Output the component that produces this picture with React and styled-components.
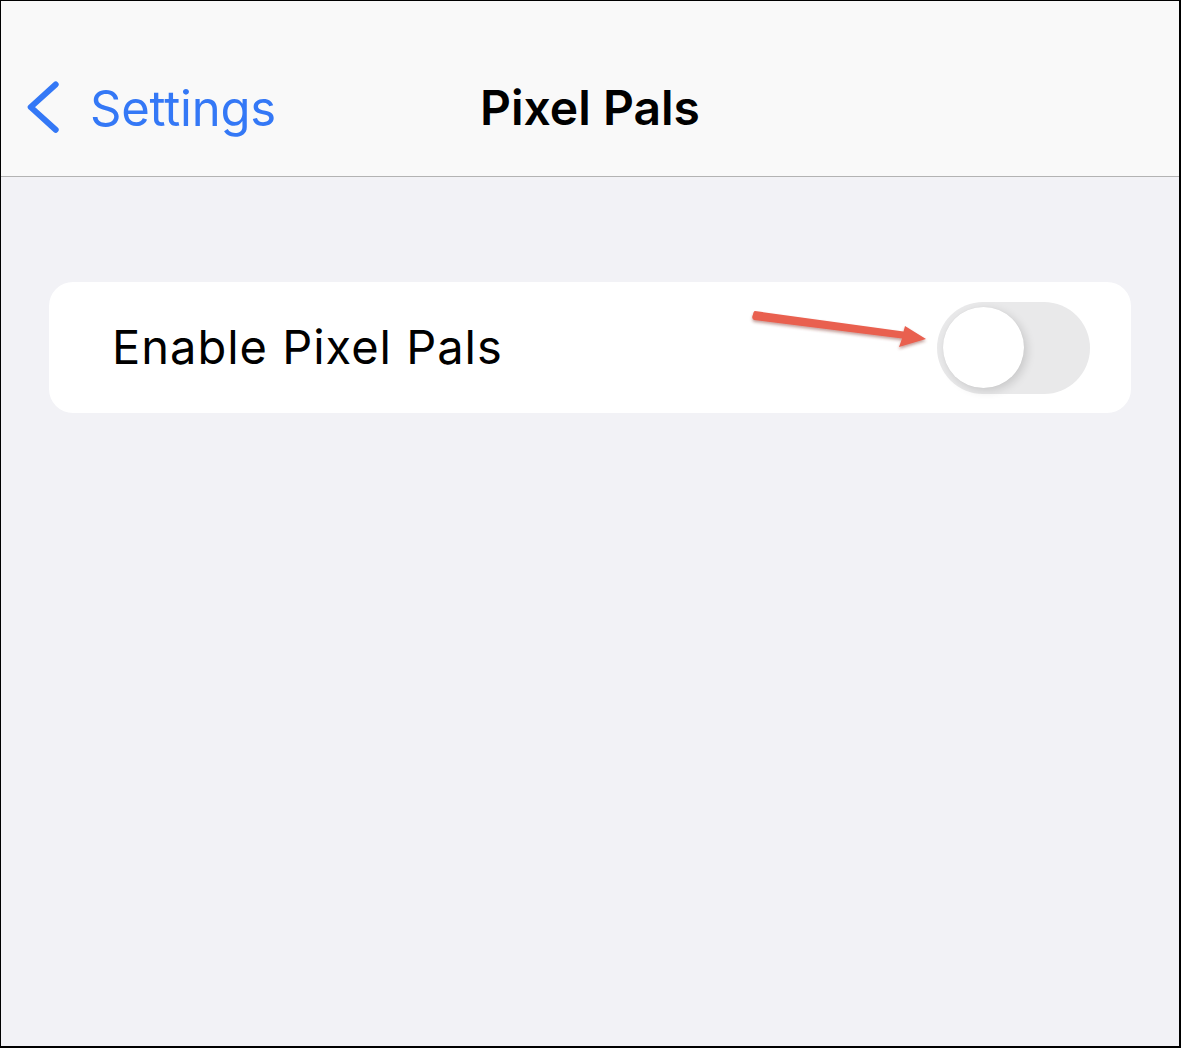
import React from "react";
import styled, { createGlobalStyle } from "styled-components";

const GlobalStyle = createGlobalStyle`
  html, body {
    margin: 0;
    padding: 0;
    background: #ffffff;
  }
  * {
    box-sizing: border-box;
  }
`;

const App = () => {
  return (
    <>
      <GlobalStyle />
      <Screen>
        <NavBar>
          <BackButton>
            <Chevron viewBox="0 0 40 60">
              <path d="M31 4 L4 28.5 L31 53" />
            </Chevron>
            <span>Settings</span>
          </BackButton>
          <Title>Pixel Pals</Title>
          <div />
        </NavBar>
        <Content>
          <Card>
            <Label>Enable Pixel Pals</Label>
            <Toggle>
              <Knob />
            </Toggle>
            <Arrow viewBox="0 0 180 40">
              <defs>
                <filter id="arrowShadow" x="-10%" y="-50%" width="120%" height="200%">
                  <feDropShadow dx="0" dy="2" stdDeviation="1.5" floodColor="#7a2a20" floodOpacity="0.45" />
                </filter>
              </defs>
              <path
                d="M2 5.5 Q0 9.5 3 11 L151 29.5 L148 38 L175 30 L154 17 L152.5 22.5 L4 2 Q2.5 2 2 5.5 Z"
                fill="#e9604f"
                filter="url(#arrowShadow)"
              />
            </Arrow>
          </Card>
        </Content>
      </Screen>
    </>
  );
};

const Screen = styled.div`
  width: 1181px;
  height: 1048px;
  border: 1px solid #000;
  border-right-width: 2px;
  border-bottom-width: 2px;
  background: #f2f2f6;
  display: flex;
  flex-direction: column;
  font-family: Inter, "Noto Sans", sans-serif;
  overflow: hidden;
`;

const NavBar = styled.div`
  height: 176px;
  background: #f9f9f9;
  border-bottom: 1px solid #b3b3b3;
  display: grid;
  grid-template-columns: 1fr auto 1fr;
  align-items: center;
  padding: 44px 26px 0 26px;
`;

const BackButton = styled.div`
  display: flex;
  align-items: center;
  gap: 26px;
  color: #3478f6;
  font-size: 49px;
  font-weight: 400;
  letter-spacing: -0.2px;
  span {
    margin-top: -4px;
  }
`;

const Chevron = styled.svg`
  width: 37px;
  height: 57px;
  margin-top: -4px;
  path {
    fill: none;
    stroke: #3478f6;
    stroke-width: 6.5;
    stroke-linecap: round;
    stroke-linejoin: round;
  }
`;

const Title = styled.div`
  font-size: 48px;
  font-weight: 600;
  color: #000;
  letter-spacing: 0px;
  margin-top: -6px;
`;

const Content = styled.div`
  padding: 105px 48px 0 48px;
`;

const Card = styled.div`
  position: relative;
  height: 131px;
  background: #fff;
  border-radius: 24px;
  display: flex;
  align-items: center;
  justify-content: space-between;
  padding: 0 41px 0 63px;
`;

const Label = styled.div`
  font-size: 47px;
  font-weight: 400;
  color: #000;
  letter-spacing: 1px;
  margin-top: -2px;
`;

const Toggle = styled.div`
  width: 153px;
  height: 92px;
  border-radius: 46px;
  background: #e9e9ea;
  display: flex;
  align-items: center;
  padding-left: 6px;
`;

const Knob = styled.div`
  width: 81px;
  height: 81px;
  border-radius: 50%;
  background: #fff;
  box-shadow: 3px 3px 10px rgba(0, 0, 0, 0.14), 0 0 1px rgba(0, 0, 0, 0.08);
`;

const Arrow = styled.svg`
  position: absolute;
  left: 702px;
  top: 27px;
  width: 180px;
  height: 40px;
  overflow: visible;
`;

export default App;
